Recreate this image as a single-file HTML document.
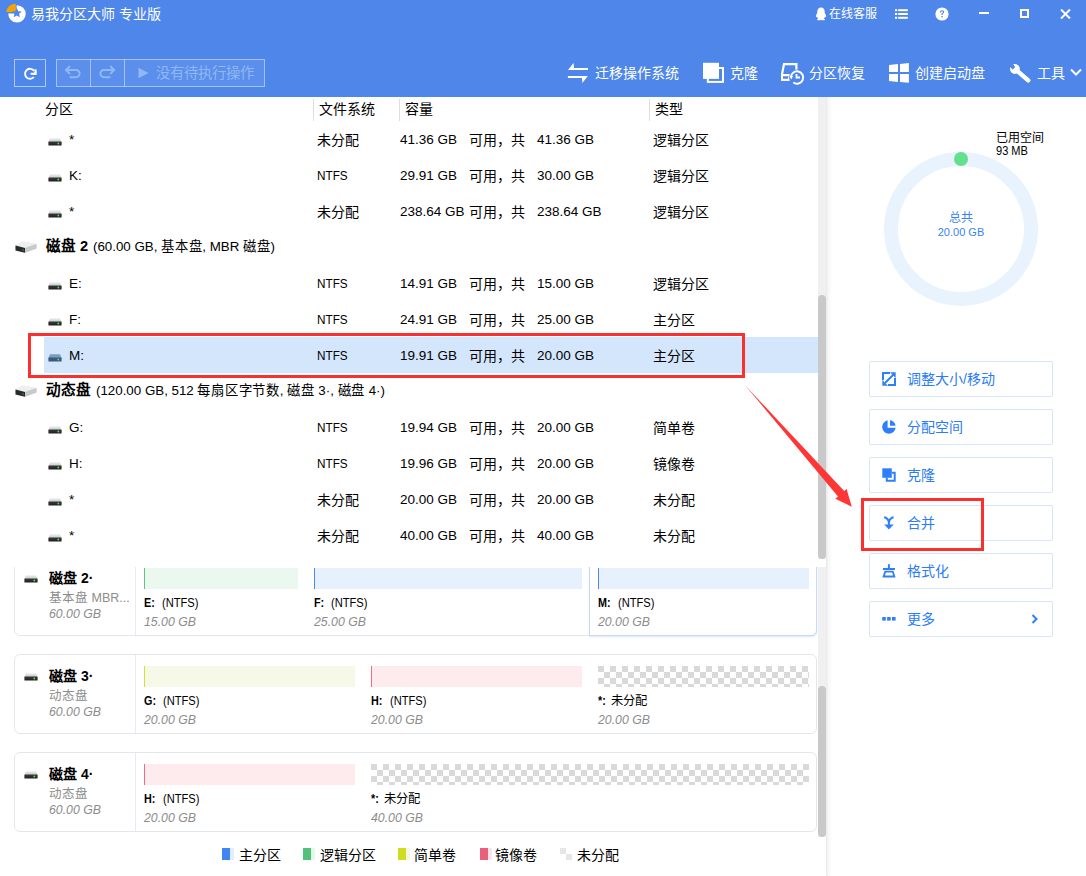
<!DOCTYPE html>
<html lang="zh-CN"><head><meta charset="utf-8">
<style>
*{margin:0;padding:0;box-sizing:border-box}
html,body{width:1086px;height:876px;overflow:hidden;background:#fff;font-family:"Liberation Sans",sans-serif;color:#000}
.a{position:absolute;white-space:nowrap}
#hdr{position:absolute;left:0;top:0;width:1086px;height:97px;background:#4e86ea}
.t14{font-size:14px;line-height:16px}
.w{color:#fff}
.card{border:1.5px solid #e2e7ee;border-radius:6px;background:#fff}
.dt{font-size:14px;line-height:16px}
.ds{font-size:12.5px;line-height:16px;color:#8c8c8c}
.di{font-size:12.3px;line-height:16px;color:#8c8c8c;font-style:italic}
.pn{font-size:13.5px;line-height:16px}
.pn b{display:inline-block;transform:scaleX(.8);transform-origin:0 0;margin-right:-2.6px}
.pf{font-size:12.8px;margin-left:7px;display:inline-block;transform:scaleX(.87);transform-origin:0 50%}
.pc{font-size:12.3px;margin-left:6px}
.bar{border-left:1px solid}
.log{background:#eaf8ef;border-color:#5cc57f}
.pri{background:#e7f1fd;border-color:#4a8bef}
.simp{background:#f6f9e8;border-color:#d3e12c}
.mir{background:#fdebee;border-color:#ec6d85}
.un{border:none;background:repeating-conic-gradient(#fff 0 25%,#d9d9d9 0 50%) 0 0/12px 12px}
.bt{font-size:14px;line-height:18px;color:#2a7cf8}
.dh{font-size:14.6px}
.dr{font-size:13.6px;margin-left:5px;display:inline-block;transform:scaleX(.98);transform-origin:0 0}
.c{font-size:14px;line-height:18px}
.n{font-size:13.5px;line-height:18px}
</style></head><body>
<svg width="0" height="0" style="position:absolute">
<defs>
<linearGradient id="gTop" x1="0" y1="0" x2="0" y2="1"><stop offset="0" stop-color="#eceef1"/><stop offset="1" stop-color="#c3c7cc"/></linearGradient>
<linearGradient id="gFront" x1="0" y1="0" x2="0" y2="1"><stop offset="0" stop-color="#3a3a3a"/><stop offset="1" stop-color="#1f1f1f"/></linearGradient>
<symbol id="drv" viewBox="0 0 14 8">
<path d="M2 0.3H12L13.6 4H0.4Z" fill="url(#gTop)"/>
<rect x="0.4" y="3.6" width="13.2" height="4" rx="0.6" fill="url(#gFront)"/>
<circle cx="10.3" cy="5.5" r="0.9" fill="#3ef03e"/>
</symbol>
<symbol id="drvSel" viewBox="0 0 14 8">
<path d="M2 0.3H12L13.6 4H0.4Z" fill="#7c9cc2"/>
<rect x="0.4" y="3.6" width="13.2" height="4" rx="0.6" fill="#3c5a7c"/>
<circle cx="10.3" cy="5.5" r="0.9" fill="#3ef03e"/>
</symbol>
<symbol id="disk" viewBox="0 0 22 12">
<path d="M0.5 4.5L8 0.5L21.5 3L21.5 7.5L10 11.8L0.5 9.5Z" fill="#d9dadc"/>
<path d="M0.5 4.5L8 0.5L21.5 3L10 7Z" fill="#eeeff1"/>
<path d="M0.5 4.5L10 7L10 11.8L0.5 9.5Z" fill="#2a2a2a"/>
<path d="M10 7L21.5 3L21.5 7.5L10 11.8Z" fill="#c8c9cc"/>
<circle cx="8" cy="9" r="0.7" fill="#2fc42f"/>
</symbol>
</defs>
</svg>

<div id="hdr"></div>
<!-- logo -->
<svg class="a" style="left:4px;top:2px" width="24" height="22" viewBox="0 0 24 22">
<circle cx="13" cy="11.9" r="8.7" fill="#fff"/>
<path d="M12.6 11.6H3A9.8 9.8 0 0 1 12.6 1.8Z" fill="#4e86ea"/>
<path d="M11.8 10H2.3A9.5 8.2 0 0 1 11.8 1.8Z" fill="#f7a300"/>
<path d="M12.8 5.8L14.2 9.2L17.8 9.5L15.1 11.8L15.9 15.3L12.8 13.4L9.7 15.3L10.5 11.8L7.8 9.5L11.4 9.2Z" fill="#4e86ea"/>
</svg>
<div class="a w" style="left:31px;top:5px;font-size:14px;line-height:18px">易我分区大师 专业版</div>
<!-- top right -->
<svg class="a" style="left:814px;top:7px" width="14" height="14" viewBox="0 0 14 14">
<path d="M7 0.5C4.6 0.5 3.3 2.4 3.3 4.6C3.3 5.2 3.4 5.6 3.2 6.1C2.6 7.1 1.8 8.3 1.9 9.8C2 10.6 2.5 10.3 2.9 9.6C3.1 10.6 3.6 11.3 4.1 11.8C3.4 12.1 2.9 12.5 3.1 13C3.4 13.6 5.3 13.4 7 12.9C8.7 13.4 10.6 13.6 10.9 13C11.1 12.5 10.6 12.1 9.9 11.8C10.4 11.3 10.9 10.6 11.1 9.6C11.5 10.3 12 10.6 12.1 9.8C12.2 8.3 11.4 7.1 10.8 6.1C10.6 5.6 10.7 5.2 10.7 4.6C10.7 2.4 9.4 0.5 7 0.5Z" fill="#fff"/>
</svg>
<div class="a w" style="left:829px;top:6px;font-size:12px;line-height:16px">在线客服</div>
<svg class="a" style="left:894px;top:8px" width="15" height="12" viewBox="0 0 15 12">
<rect x="1" y="1.2" width="2.2" height="2" fill="#fff"/><rect x="4.2" y="1.2" width="9.6" height="2" fill="#fff"/>
<rect x="1" y="5" width="2.2" height="2" fill="#fff"/><rect x="4.2" y="5" width="9.6" height="2" fill="#fff"/>
<rect x="1" y="8.8" width="2.2" height="2" fill="#fff"/><rect x="4.2" y="8.8" width="9.6" height="2" fill="#fff"/>
</svg>
<svg class="a" style="left:935px;top:7px" width="14" height="14" viewBox="0 0 14 14">
<circle cx="7" cy="7" r="6.6" fill="#fff"/>
<path d="M4.9 5.4C4.9 4.1 5.8 3.3 7.1 3.3C8.4 3.3 9.2 4.1 9.2 5.1C9.2 6.4 7.8 6.6 7.6 7.6V8.1H6.4V7.4C6.6 6 8 5.8 8 5.1C8 4.6 7.6 4.3 7.1 4.3C6.5 4.3 6.1 4.7 6.1 5.4Z" fill="#4e86ea"/>
<rect x="6.4" y="9" width="1.3" height="1.4" fill="#4e86ea"/>
</svg>
<div class="a" style="left:979px;top:12px;width:10px;height:2px;background:#fff"></div>
<div class="a" style="left:1020px;top:9px;width:9px;height:9px;border:2px solid #fff"></div>
<svg class="a" style="left:1060px;top:9px" width="11" height="10" viewBox="0 0 11 10">
<path d="M1 0.5L10 9.5M10 0.5L1 9.5" stroke="#fff" stroke-width="2"/>
</svg>
<!-- toolbar left -->
<div class="a" style="left:14px;top:59px;width:32px;height:28px;border:1px solid rgba(255,255,255,.55)"></div>
<svg class="a" style="left:22px;top:65px" width="17" height="16" viewBox="0 0 17 16">
<path d="M12.15 5.93A5 5 0 1 0 11.88 12.01" fill="none" stroke="#fff" stroke-width="1.9"/>
<path d="M13.5 4.2V8.7H8.6" fill="none" stroke="#fff" stroke-width="2"/><path d="M14.5 5.5V9.7H10.5Z" fill="#fff"/>
</svg>
<div class="a" style="left:56px;top:59px;width:209px;height:28px;border:1px solid rgba(255,255,255,.45);background:rgba(255,255,255,.08)"></div>
<div class="a" style="left:90px;top:59px;width:1px;height:28px;background:rgba(255,255,255,.45)"></div>
<div class="a" style="left:124px;top:59px;width:1px;height:28px;background:rgba(255,255,255,.45)"></div>
<svg class="a" style="left:64px;top:64px" width="18" height="16" viewBox="0 0 18 16">
<path d="M2.4 6H12A3.6 3.6 0 0 1 12 13.2H6.4" fill="none" stroke="#8fb8f5" stroke-width="2" stroke-linecap="round"/>
<path d="M5.4 2.6L2 6L5.4 9.4" fill="none" stroke="#8fb8f5" stroke-width="2" stroke-linecap="round"/>
</svg>
<svg class="a" style="left:98px;top:64px" width="18" height="16" viewBox="0 0 18 16">
<path d="M15.8 6H6A3.6 3.6 0 0 0 6 13.2H11.6" fill="none" stroke="#8fb8f5" stroke-width="2" stroke-linecap="round"/>
<path d="M12.8 2.6L16.2 6L12.8 9.4" fill="none" stroke="#8fb8f5" stroke-width="2" stroke-linecap="round"/>
</svg>
<svg class="a" style="left:138px;top:67px" width="12" height="12" viewBox="0 0 12 12">
<path d="M0.5 0.8L10.5 6L0.5 11.2Z" fill="#8fb8f5"/>
</svg>
<div class="a" style="left:156px;top:64px;color:#8fb8f5;font-size:14.4px;line-height:18px">没有待执行操作</div>
<!-- toolbar right -->
<svg class="a" style="left:566px;top:62px" width="24" height="22" viewBox="0 0 24 22">
<path d="M2 8L7.5 1L8.1 5.9H22V8Z" fill="#fff"/>
<path d="M1.9 14H21.8L16.4 20.9L16 16.1H1.9Z" fill="#fff"/>
</svg>
<div class="a w" style="left:595px;top:64px;font-size:14px;line-height:18px">迁移操作系统</div>
<svg class="a" style="left:702px;top:62px" width="23" height="22" viewBox="0 0 23 22">
<rect x="5.8" y="6" width="15.2" height="13.9" fill="none" stroke="#fff" stroke-width="2"/>
<rect x="1" y="0.8" width="16" height="16.1" fill="#fff"/>
<path d="M17 0.8V18.9H4.8" fill="none" stroke="#4e86ea" stroke-width="0" />
</svg>
<div class="a w" style="left:730px;top:64px;font-size:14px;line-height:18px">克隆</div>
<svg class="a" style="left:780px;top:62px" width="26" height="24" viewBox="0 0 26 24">
<path d="M16.4 8V2.1H4L2.1 11.8V17.7H10.5" fill="none" stroke="#fff" stroke-width="2.2" stroke-linejoin="miter"/>
<rect x="1" y="12" width="10" height="6.8" fill="#fff"/>
<path d="M3 14.2H8.7L7.8 16.8H3Z" fill="#4e86ea"/>
<circle cx="17" cy="15.5" r="8" fill="#4e86ea"/>
<path d="M10.8 15.5A6.2 6.2 0 1 1 13.3 20.5" fill="none" stroke="#fff" stroke-width="2"/>
<path d="M9.5 14L13 14L11.2 17.4Z" fill="#fff"/>
<path d="M16.5 12V15.5H20" fill="none" stroke="#fff" stroke-width="1.8"/>
</svg>
<div class="a w" style="left:809px;top:64px;font-size:14px;line-height:18px">分区恢复</div>
<svg class="a" style="left:888px;top:63px" width="22" height="21" viewBox="0 0 22 21">
<path d="M1 1.9L10 1V8.9H1Z" fill="#fff"/>
<path d="M12 0.9L20.9 0V8.9H12Z" fill="#fff"/>
<path d="M1 11.1H10V19L1 17.9Z" fill="#fff"/>
<path d="M12 11.1H20.9V19.8L12 19Z" fill="#fff"/>
</svg>
<div class="a w" style="left:915px;top:64px;font-size:14px;line-height:18px">创建启动盘</div>
<svg class="a" style="left:1008px;top:62px" width="24" height="22" viewBox="0 0 24 22">
<circle cx="6.9" cy="7" r="4.9" fill="#fff"/>
<path d="M7 7L20.2 18.4" stroke="#fff" stroke-width="4.4" stroke-linecap="round"/>
<path d="M0.8 3.6L4.8 1.2L7.2 5.2L4.6 7.4Z" fill="#4e86ea"/>
</svg>
<div class="a w" style="left:1037px;top:64px;font-size:14px;line-height:18px">工具</div>
<svg class="a" style="left:1070px;top:68px" width="12" height="9" viewBox="0 0 12 9">
<path d="M1 1.5L6 6.5L11 1.5" fill="none" stroke="#fff" stroke-width="2"/>
</svg>

<!-- LIST -->
<div class="a" style="left:0;top:97px;width:818px;height:462px;overflow:hidden">
<div class="a c" style="left:45px;top:3px">分区</div>
<div class="a" style="left:313px;top:2px;width:1px;height:22px;background:#dedede"></div>
<div class="a c" style="left:319px;top:3px">文件系统</div>
<div class="a" style="left:399px;top:2px;width:1px;height:22px;background:#dedede"></div>
<div class="a c" style="left:405px;top:3px">容量</div>
<div class="a" style="left:649px;top:2px;width:1px;height:22px;background:#dedede"></div>
<div class="a c" style="left:655px;top:3px">类型</div>
<svg class="a" style="left:48px;top:41px" width="14" height="8"><use href="#drv"/></svg>
<div class="a n" style="left:69px;top:34px">*</div>
<div class="a c" style="left:317px;top:34px">未分配</div>
<div class="a n" style="left:400px;top:34px">41.36 GB</div>
<div class="a c" style="left:469px;top:34px">可用，共</div>
<div class="a n" style="left:537px;top:34px">41.36 GB</div>
<div class="a c" style="left:653px;top:34px">逻辑分区</div>
<svg class="a" style="left:48px;top:77px" width="14" height="8"><use href="#drv"/></svg>
<div class="a n" style="left:69px;top:70px">K:</div>
<div class="a n" style="left:317px;top:70px;transform:scaleX(.87);transform-origin:0 0">NTFS</div>
<div class="a n" style="left:400px;top:70px">29.91 GB</div>
<div class="a c" style="left:469px;top:70px">可用，共</div>
<div class="a n" style="left:537px;top:70px">30.00 GB</div>
<div class="a c" style="left:653px;top:70px">逻辑分区</div>
<svg class="a" style="left:48px;top:113px" width="14" height="8"><use href="#drv"/></svg>
<div class="a n" style="left:69px;top:106px">*</div>
<div class="a c" style="left:317px;top:106px">未分配</div>
<div class="a n" style="left:400px;top:106px">238.64 GB</div>
<div class="a c" style="left:469px;top:106px">可用，共</div>
<div class="a n" style="left:537px;top:106px">238.64 GB</div>
<div class="a c" style="left:653px;top:106px">逻辑分区</div>
<svg class="a" style="left:15px;top:144px" width="22" height="12"><use href="#disk"/></svg>
<div class="a c" style="left:46px;top:140px"><b class="dh">磁盘 2</b><span class="dr">(60.00 GB, 基本盘, MBR 磁盘)</span></div>
<svg class="a" style="left:48px;top:185px" width="14" height="8"><use href="#drv"/></svg>
<div class="a n" style="left:69px;top:178px">E:</div>
<div class="a n" style="left:317px;top:178px;transform:scaleX(.87);transform-origin:0 0">NTFS</div>
<div class="a n" style="left:400px;top:178px">14.91 GB</div>
<div class="a c" style="left:469px;top:178px">可用，共</div>
<div class="a n" style="left:537px;top:178px">15.00 GB</div>
<div class="a c" style="left:653px;top:178px">逻辑分区</div>
<svg class="a" style="left:48px;top:221px" width="14" height="8"><use href="#drv"/></svg>
<div class="a n" style="left:69px;top:214px">F:</div>
<div class="a n" style="left:317px;top:214px;transform:scaleX(.87);transform-origin:0 0">NTFS</div>
<div class="a n" style="left:400px;top:214px">24.91 GB</div>
<div class="a c" style="left:469px;top:214px">可用，共</div>
<div class="a n" style="left:537px;top:214px">25.00 GB</div>
<div class="a c" style="left:653px;top:214px">主分区</div>
<div class="a" style="left:44px;top:240px;width:774px;height:36px;background:#d3e6fc"></div>
<svg class="a" style="left:48px;top:257px" width="14" height="8"><use href="#drvSel"/></svg>
<div class="a n" style="left:69px;top:250px">M:</div>
<div class="a n" style="left:317px;top:250px;transform:scaleX(.87);transform-origin:0 0">NTFS</div>
<div class="a n" style="left:400px;top:250px">19.91 GB</div>
<div class="a c" style="left:469px;top:250px">可用，共</div>
<div class="a n" style="left:537px;top:250px">20.00 GB</div>
<div class="a c" style="left:653px;top:250px">主分区</div>
<svg class="a" style="left:15px;top:288px" width="22" height="12"><use href="#disk"/></svg>
<div class="a c" style="left:46px;top:284px"><b class="dh">动态盘</b><span class="dr">(120.00 GB, 512 每扇区字节数, 磁盘 3·, 磁盘 4·)</span></div>
<svg class="a" style="left:48px;top:329px" width="14" height="8"><use href="#drv"/></svg>
<div class="a n" style="left:69px;top:322px">G:</div>
<div class="a n" style="left:317px;top:322px;transform:scaleX(.87);transform-origin:0 0">NTFS</div>
<div class="a n" style="left:400px;top:322px">19.94 GB</div>
<div class="a c" style="left:469px;top:322px">可用，共</div>
<div class="a n" style="left:537px;top:322px">20.00 GB</div>
<div class="a c" style="left:653px;top:322px">简单卷</div>
<svg class="a" style="left:48px;top:365px" width="14" height="8"><use href="#drv"/></svg>
<div class="a n" style="left:69px;top:358px">H:</div>
<div class="a n" style="left:317px;top:358px;transform:scaleX(.87);transform-origin:0 0">NTFS</div>
<div class="a n" style="left:400px;top:358px">19.96 GB</div>
<div class="a c" style="left:469px;top:358px">可用，共</div>
<div class="a n" style="left:537px;top:358px">20.00 GB</div>
<div class="a c" style="left:653px;top:358px">镜像卷</div>
<svg class="a" style="left:48px;top:401px" width="14" height="8"><use href="#drv"/></svg>
<div class="a n" style="left:69px;top:394px">*</div>
<div class="a c" style="left:317px;top:394px">未分配</div>
<div class="a n" style="left:400px;top:394px">20.00 GB</div>
<div class="a c" style="left:469px;top:394px">可用，共</div>
<div class="a n" style="left:537px;top:394px">20.00 GB</div>
<div class="a c" style="left:653px;top:394px">未分配</div>
<svg class="a" style="left:48px;top:437px" width="14" height="8"><use href="#drv"/></svg>
<div class="a n" style="left:69px;top:430px">*</div>
<div class="a c" style="left:317px;top:430px">未分配</div>
<div class="a n" style="left:400px;top:430px">40.00 GB</div>
<div class="a c" style="left:469px;top:430px">可用，共</div>
<div class="a n" style="left:537px;top:430px">40.00 GB</div>
<div class="a c" style="left:653px;top:430px">未分配</div>
</div>
<!-- /LIST -->

<!-- CARDS -->
<div class="a" style="left:0;top:567px;width:818px;height:270px;overflow:hidden">
<div class="a card" style="left:14px;top:-11px;width:803px;height:80px"></div>
<div class="a" style="left:135px;top:-10px;width:1px;height:78px;background:#e6ebf2"></div>
<div class="a" style="left:589px;top:-11px;width:228px;height:80px;border:1px solid #c6d9f6;border-radius:0 5px 5px 0;box-shadow:0 1px 2px rgba(120,160,220,.25)"></div>
<svg class="a" style="left:24px;top:8px" width="14" height="8"><use href="#drv"/></svg>
<div class="a dt" style="left:49px;top:3px"><b>磁盘</b> <b class="bn">2·</b></div>
<div class="a ds" style="left:49px;top:23px">基本盘 MBR...</div>
<div class="a di" style="left:49px;top:39px">60.00 GB</div>
<div class="a bar log" style="left:144px;top:1px;width:154px;height:21px"></div>
<div class="a pn" style="left:144px;top:28px"><b>E:</b><span class="pf">(NTFS)</span></div>
<div class="a di" style="left:144px;top:47px">15.00 GB</div>
<div class="a bar pri" style="left:314px;top:1px;width:268px;height:21px"></div>
<div class="a pn" style="left:314px;top:28px"><b>F:</b><span class="pf">(NTFS)</span></div>
<div class="a di" style="left:314px;top:47px">25.00 GB</div>
<div class="a bar pri" style="left:598px;top:1px;width:211px;height:21px"></div>
<div class="a pn" style="left:598px;top:28px"><b>M:</b><span class="pf">(NTFS)</span></div>
<div class="a di" style="left:598px;top:47px">20.00 GB</div>
<div class="a card" style="left:14px;top:87px;width:803px;height:80px"></div>
<div class="a" style="left:135px;top:88px;width:1px;height:78px;background:#e6ebf2"></div>
<svg class="a" style="left:24px;top:106px" width="14" height="8"><use href="#drv"/></svg>
<div class="a dt" style="left:49px;top:101px"><b>磁盘</b> <b class="bn">3·</b></div>
<div class="a ds" style="left:49px;top:121px">动态盘</div>
<div class="a di" style="left:49px;top:137px">60.00 GB</div>
<div class="a bar simp" style="left:144px;top:99px;width:211px;height:21px"></div>
<div class="a pn" style="left:144px;top:126px"><b>G:</b><span class="pf">(NTFS)</span></div>
<div class="a di" style="left:144px;top:145px">20.00 GB</div>
<div class="a bar mir" style="left:371px;top:99px;width:211px;height:21px"></div>
<div class="a pn" style="left:371px;top:126px"><b>H:</b><span class="pf">(NTFS)</span></div>
<div class="a di" style="left:371px;top:145px">20.00 GB</div>
<div class="a bar un" style="left:598px;top:99px;width:211px;height:21px"></div>
<div class="a pn" style="left:598px;top:126px"><b>*:</b><span class="pc">未分配</span></div>
<div class="a di" style="left:598px;top:145px">20.00 GB</div>
<div class="a card" style="left:14px;top:185px;width:803px;height:80px"></div>
<div class="a" style="left:135px;top:186px;width:1px;height:78px;background:#e6ebf2"></div>
<svg class="a" style="left:24px;top:204px" width="14" height="8"><use href="#drv"/></svg>
<div class="a dt" style="left:49px;top:199px"><b>磁盘</b> <b class="bn">4·</b></div>
<div class="a ds" style="left:49px;top:219px">动态盘</div>
<div class="a di" style="left:49px;top:235px">60.00 GB</div>
<div class="a bar mir" style="left:144px;top:197px;width:211px;height:21px"></div>
<div class="a pn" style="left:144px;top:224px"><b>H:</b><span class="pf">(NTFS)</span></div>
<div class="a di" style="left:144px;top:243px">20.00 GB</div>
<div class="a bar un" style="left:371px;top:197px;width:438px;height:21px"></div>
<div class="a pn" style="left:371px;top:224px"><b>*:</b><span class="pc">未分配</span></div>
<div class="a di" style="left:371px;top:243px">40.00 GB</div>
</div>
<div class="a" style="left:818px;top:97px;width:8px;height:462px;background:#f0f0f0"></div>
<div class="a" style="left:818px;top:295px;width:8px;height:264px;background:#c9c9c9;border-radius:4px"></div>
<div class="a" style="left:818px;top:567px;width:8px;height:270px;background:#f0f0f0"></div>
<div class="a" style="left:818px;top:686px;width:8px;height:151px;background:#c9c9c9;border-radius:4px"></div>
<div class="a" style="left:222px;top:848px;width:8px;height:12px;background:#3f86f2"></div>
<div class="a" style="left:230px;top:848px;width:4px;height:12px;background:#e3eefc"></div>
<div class="a c" style="left:239px;top:846px">主分区</div>
<div class="a" style="left:303px;top:848px;width:8px;height:12px;background:#52c27a"></div>
<div class="a" style="left:311px;top:848px;width:4px;height:12px;background:#e6f7ec"></div>
<div class="a c" style="left:320px;top:846px">逻辑分区</div>
<div class="a" style="left:398px;top:848px;width:8px;height:12px;background:#cfdc22"></div>
<div class="a" style="left:406px;top:848px;width:4px;height:12px;background:#f5f8e0"></div>
<div class="a c" style="left:414px;top:846px">简单卷</div>
<div class="a" style="left:480px;top:848px;width:8px;height:12px;background:#e9607c"></div>
<div class="a" style="left:488px;top:848px;width:4px;height:12px;background:#fbe4e9"></div>
<div class="a c" style="left:495px;top:846px">镜像卷</div>
<div class="a" style="left:560px;top:848px;width:6px;height:6px;background:#e6e6e6"></div>
<div class="a" style="left:566px;top:854px;width:6px;height:6px;background:#e6e6e6"></div>
<div class="a c" style="left:577px;top:846px">未分配</div>
<!-- /CARDS -->

<!-- RIGHT -->
<div class="a" style="left:826px;top:97px;width:260px;height:779px;background:#fff"></div>
<div class="a" style="left:826px;top:97px;width:6px;height:779px;background:linear-gradient(90deg,#e9e9e9,#f7f7f7 40%,rgba(255,255,255,0))"></div>
<svg class="a" style="left:876px;top:144px" width="170" height="170" viewBox="0 0 170 170">
<circle cx="85" cy="85" r="70" fill="none" stroke="#e8f3fe" stroke-width="14"/>
<circle cx="85" cy="15" r="7" fill="#63e08f"/>
</svg>
<div class="a" style="left:996px;top:131px;font-size:12px;line-height:15px">已用空间</div>
<div class="a" style="left:996px;top:144px;font-size:12px;line-height:15px;display:inline-block;transform:scaleX(.92);transform-origin:0 0">93 MB</div>
<div class="a" style="left:911px;top:211px;width:100px;text-align:center;font-size:12px;line-height:15px;color:#3a83f0">总共</div>
<div class="a" style="left:911px;top:225px;width:100px;text-align:center;font-size:11px;line-height:15px;color:#3a83f0">20.00 GB</div>
<div class="a" style="left:869px;top:361px;width:184px;height:36px;border:1px solid #d7e5fb;border-radius:2px"></div>
<svg class="a" style="left:882px;top:372px" width="14" height="14" viewBox="0 0 14 14"><path d="M1 8V1H8" fill="none" stroke="#2f80f8" stroke-width="2"/><path d="M13 6V13H6" fill="none" stroke="#2f80f8" stroke-width="2"/><path d="M3 11L12 2" stroke="#2f80f8" stroke-width="2"/><path d="M0.3 13.7V8L6 13.7Z" fill="#2f80f8"/><path d="M13.7 0.3V6L8 0.3Z" fill="#2f80f8"/></svg>
<div class="a bt" style="left:907px;top:370px">调整大小/移动</div>
<div class="a" style="left:869px;top:409px;width:184px;height:36px;border:1px solid #d7e5fb;border-radius:2px"></div>
<svg class="a" style="left:882px;top:420px" width="14" height="14" viewBox="0 0 14 14"><path d="M5.6 0.3V7.8H13.7A6.8 6.8 0 1 1 5.6 0.3Z" fill="#2f80f8"/><path d="M8 0.3A6.8 6.8 0 0 1 13.6 5.7H8Z" fill="#2f80f8"/></svg>
<div class="a bt" style="left:907px;top:418px">分配空间</div>
<div class="a" style="left:869px;top:457px;width:184px;height:36px;border:1px solid #d7e5fb;border-radius:2px"></div>
<svg class="a" style="left:882px;top:468px" width="14" height="14" viewBox="0 0 14 14"><rect x="0.3" y="0.3" width="9.5" height="9.5" fill="#2f80f8"/><path d="M9.8 4.8H12.7V12.7H4.8V9.8" fill="none" stroke="#2f80f8" stroke-width="2"/></svg>
<div class="a bt" style="left:907px;top:466px">克隆</div>
<div class="a" style="left:869px;top:505px;width:184px;height:36px;border:1px solid #d7e5fb;border-radius:2px"></div>
<svg class="a" style="left:882px;top:516px" width="14" height="14" viewBox="0 0 14 14"><path d="M2.3 1C5.3 2.2 6.9 3.6 6.9 7V9M11.5 1C8.5 2.2 6.9 3.6 6.9 7" fill="none" stroke="#2f80f8" stroke-width="2"/><path d="M2.2 8.4H11.8L6.9 13.4Z" fill="#2f80f8"/></svg>
<div class="a bt" style="left:907px;top:514px">合并</div>
<div class="a" style="left:869px;top:553px;width:184px;height:36px;border:1px solid #d7e5fb;border-radius:2px"></div>
<svg class="a" style="left:882px;top:564px" width="14" height="14" viewBox="0 0 14 14"><path d="M6.9 0.2V4.5" stroke="#2f80f8" stroke-width="2"/><path d="M1 5H13" stroke="#2f80f8" stroke-width="2"/><path d="M3.2 7.6H10.8L12.4 12.5H1.6Z" fill="none" stroke="#2f80f8" stroke-width="1.8"/></svg>
<div class="a bt" style="left:907px;top:562px">格式化</div>
<div class="a" style="left:869px;top:601px;width:184px;height:36px;border:1px solid #d7e5fb;border-radius:2px"></div>
<svg class="a" style="left:882px;top:612px" width="14" height="14" viewBox="0 0 14 14"><rect x="0.2" y="5" width="3.6" height="3.6" fill="#2f80f8"/><rect x="5.1" y="5" width="3.6" height="3.6" fill="#2f80f8"/><rect x="10" y="5" width="3.6" height="3.6" fill="#2f80f8"/></svg>
<div class="a bt" style="left:907px;top:610px">更多</div>
<svg class="a" style="left:1031px;top:614px" width="8" height="10" viewBox="0 0 8 10"><path d="M1.5 1L5.5 5L1.5 9" fill="none" stroke="#2f80f8" stroke-width="2"/></svg>
<!-- /RIGHT -->

<!-- OVERLAY -->
<div class="a" style="left:28px;top:333px;width:717px;height:45px;border:3px solid #fc2f2f"></div>
<div class="a" style="left:861px;top:498px;width:123px;height:53px;border:3px solid #fc2f2f"></div>
<svg class="a" style="left:0;top:0" width="1086" height="876" viewBox="0 0 1086 876">
<path d="M745.3 385.4L838 496.5L835.4 498.8L851.8 506.8L846.6 489.1L844.2 491.1Z" fill="#ff3636"/>
</svg>
</body></html>
